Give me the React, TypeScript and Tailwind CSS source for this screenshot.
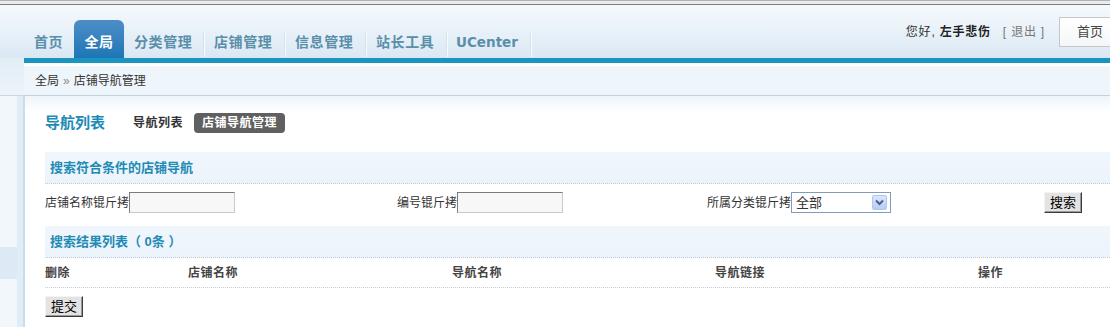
const tabs = [
  { label: '分类管理', w: 'w-[79px] pl-[10px]' },
  { label: '店铺管理', w: 'w-[79px] pl-[9px]' },
  { label: '信息管理', w: 'w-[79px] pl-[9px]' },
  { label: '站长工具', w: 'w-[79px] pl-[9px]' },
];

function Sep() {
  return <span className="mb-[1px] h-[25px] w-[2px] border-l border-r border-l-[#d3e2ed] border-r-[#f7fbfe]" />;
}

function OldButton({ children }: { children: React.ReactNode }) {
  return (
    <button className="h-[21px] border border-t-[#f4f4f4] border-l-[#f4f4f4] border-r-[#3c3c3c] border-b-[#3c3c3c] bg-[#e3e3e3] px-[5px] text-[13px] leading-[18px] text-black shadow-[inset_-1px_-1px_0_#9a9a9a]">
      {children}
    </button>
  );
}

function TextInput({ w }: { w: string }) {
  return (
    <input
      className={`${w} h-[21px] border border-t-[#7b7b7b] border-l-[#7b7b7b] border-r-[#cacaca] border-b-[#cacaca] bg-[#f7f7f7] outline-none`}
    />
  );
}

export default function App() {
  return (
    <div className="h-[327px] w-[1110px] overflow-hidden bg-white font-['Liberation_Sans','Noto_Sans_CJK_SC',sans-serif] text-[12px] text-[#333]">
      <div className="h-[4px] border-t border-[#b3b3b3] bg-[#e9ecef]" />
      <div className="h-[1px] bg-[#7d7d7d]" />

      {/* header */}
      <header className="flex h-[53px] bg-gradient-to-b from-[#f5f9fd] via-[#eaf2f9] via-[45%] to-[#dae8f4]">
        <nav className="flex h-full items-end pl-[22px] text-[14px] font-bold tracking-[0.6px] text-[#5a8fa9]">
          <a className="flex h-[38px] w-[52px] items-center pl-[12px] pt-[6px]">首页</a>
          <a className="flex h-[38px] w-[50px] items-center justify-center rounded-t-[6px] bg-gradient-to-b from-[#4c8ec7] to-[#1b76b5] pt-[6px] text-white">
            全局
          </a>
          {tabs.map((t, i) => (
            <div key={t.label} className="flex items-end">
              {i > 0 && <Sep />}
              <a className={`flex h-[38px] ${t.w} items-center pt-[6px]`}>{t.label}</a>
            </div>
          ))}
          <Sep />
          <a className="flex h-[38px] w-[82px] items-center pl-[8px] pt-[6px] font-['DejaVu_Sans',sans-serif] text-[13.5px] tracking-normal">
            UCenter
          </a>
          <Sep />
        </nav>
        <div className="ml-auto mt-[12px] flex items-start">
          <div className="mt-[7px] leading-[16px] tracking-[0.8px]">
            您好, <b className="text-[#222]">左手悲伤</b>
            <span className="ml-[12px] text-[#777]">[ 退出 ]</span>
          </div>
          <a className="ml-[14px] flex h-[30px] w-[51px] items-center border border-r-0 border-[#c4c8cc] bg-gradient-to-b from-white to-[#f4f6f8] pl-[17px] text-[13px] text-[#444]">
            首页
          </a>
        </div>
      </header>

      {/* breadcrumb */}
      <div className="flex h-[38px]">
        <div className="w-[24px] border-b border-[#c9d9e5] bg-gradient-to-b from-[#e2edf6] to-[#edf4fa]" />
        <div className="flex flex-1 flex-col">
          <div className="h-[5px] bg-[#1995c0]" />
          <div className="h-[3px] bg-white" />
          <div className="flex flex-1 items-center border-b border-[#c3d3de] bg-[#eff6fb] pl-[11px] leading-[16px]">
            全局 <span className="mx-[4px] text-[#888]">»</span> 店铺导航管理
          </div>
        </div>
      </div>

      {/* body */}
      <div className="flex h-[231px]">
        <aside className="flex w-[25px]">
          <div className="flex w-[17px] flex-col bg-[#f2f7fb]">
            <div className="h-[151px]" />
            <div className="h-[32px] bg-[#dde9f4]" />
          </div>
          <div className="w-[6px] bg-[#e1edf6]" />
          <div className="w-[2px] bg-[#cadcea]" />
        </aside>

        <main className="flex-1 bg-gradient-to-b from-[#eef5fa] to-white to-[7%] pl-[20px]">
          <div className="mt-[17px] flex h-[20px] items-center">
            <h2 className="w-[88px] text-[15px] font-bold text-[#1b8bb6]">导航列表</h2>
            <a className="mr-[11px] font-bold tracking-[0.5px] text-[#333]">导航列表</a>
            <a className="flex h-[20px] items-center rounded-[4px] bg-[#606060] px-[8px] font-bold tracking-[0.5px] text-white">
              店铺导航管理
            </a>
          </div>

          <div className="mt-[19px] flex h-[32px] items-center border-b border-dotted border-[#c3ccd5] bg-gradient-to-b from-[#f0f6fc] to-[#ecf4fb] pl-[5px] text-[13px] font-bold text-[#1f8bb5]">
            搜索符合条件的店铺导航
          </div>

          <div className="mt-[8px] flex h-[21px] items-center">
            <div className="flex w-[352px] items-center">
              <span>店铺名称锟斤拷</span>
              <TextInput w="w-[106px]" />
            </div>
            <div className="flex w-[310px] items-center">
              <span>编号锟斤拷</span>
              <TextInput w="w-[106px]" />
            </div>
            <div className="flex w-[337px] items-center">
              <span>所属分类锟斤拷</span>
              <div className="flex h-[21px] w-[100px] items-center justify-between border border-[#7f9db9] bg-white pl-[4px] pr-[3px] text-[13px]">
                <span>全部</span>
                <span className="flex h-[15px] w-[15px] items-center justify-center rounded-[2px] border border-[#b3c5ef] bg-gradient-to-b from-[#dbe6fe] to-[#b7ccf7]">
                  <svg width="9" height="7" viewBox="0 0 9 7">
                    <path d="M1 1.5 L4.5 5 L8 1.5" fill="none" stroke="#4d6185" strokeWidth="2" />
                  </svg>
                </span>
              </div>
            </div>
            <OldButton>搜索</OldButton>
          </div>

          <div className="mt-[13px] flex h-[32px] items-center border-b border-dotted border-[#c3ccd5] bg-gradient-to-b from-[#f0f6fc] to-[#ecf4fb] pl-[5px] text-[13px] font-bold text-[#1f8bb5]">
            搜索结果列表（ 0条 ）
          </div>

          <div className="flex h-[30px] items-center border-b border-dotted border-[#c3ccd5] font-bold tracking-[0.5px] text-[#444]">
            <span className="w-[143px]">删除</span>
            <span className="w-[264px]">店铺名称</span>
            <span className="w-[263px]">导航名称</span>
            <span className="w-[263px]">导航链接</span>
            <span>操作</span>
          </div>

          <div className="mt-[8px]">
            <OldButton>提交</OldButton>
          </div>
        </main>
      </div>
    </div>
  );
}
